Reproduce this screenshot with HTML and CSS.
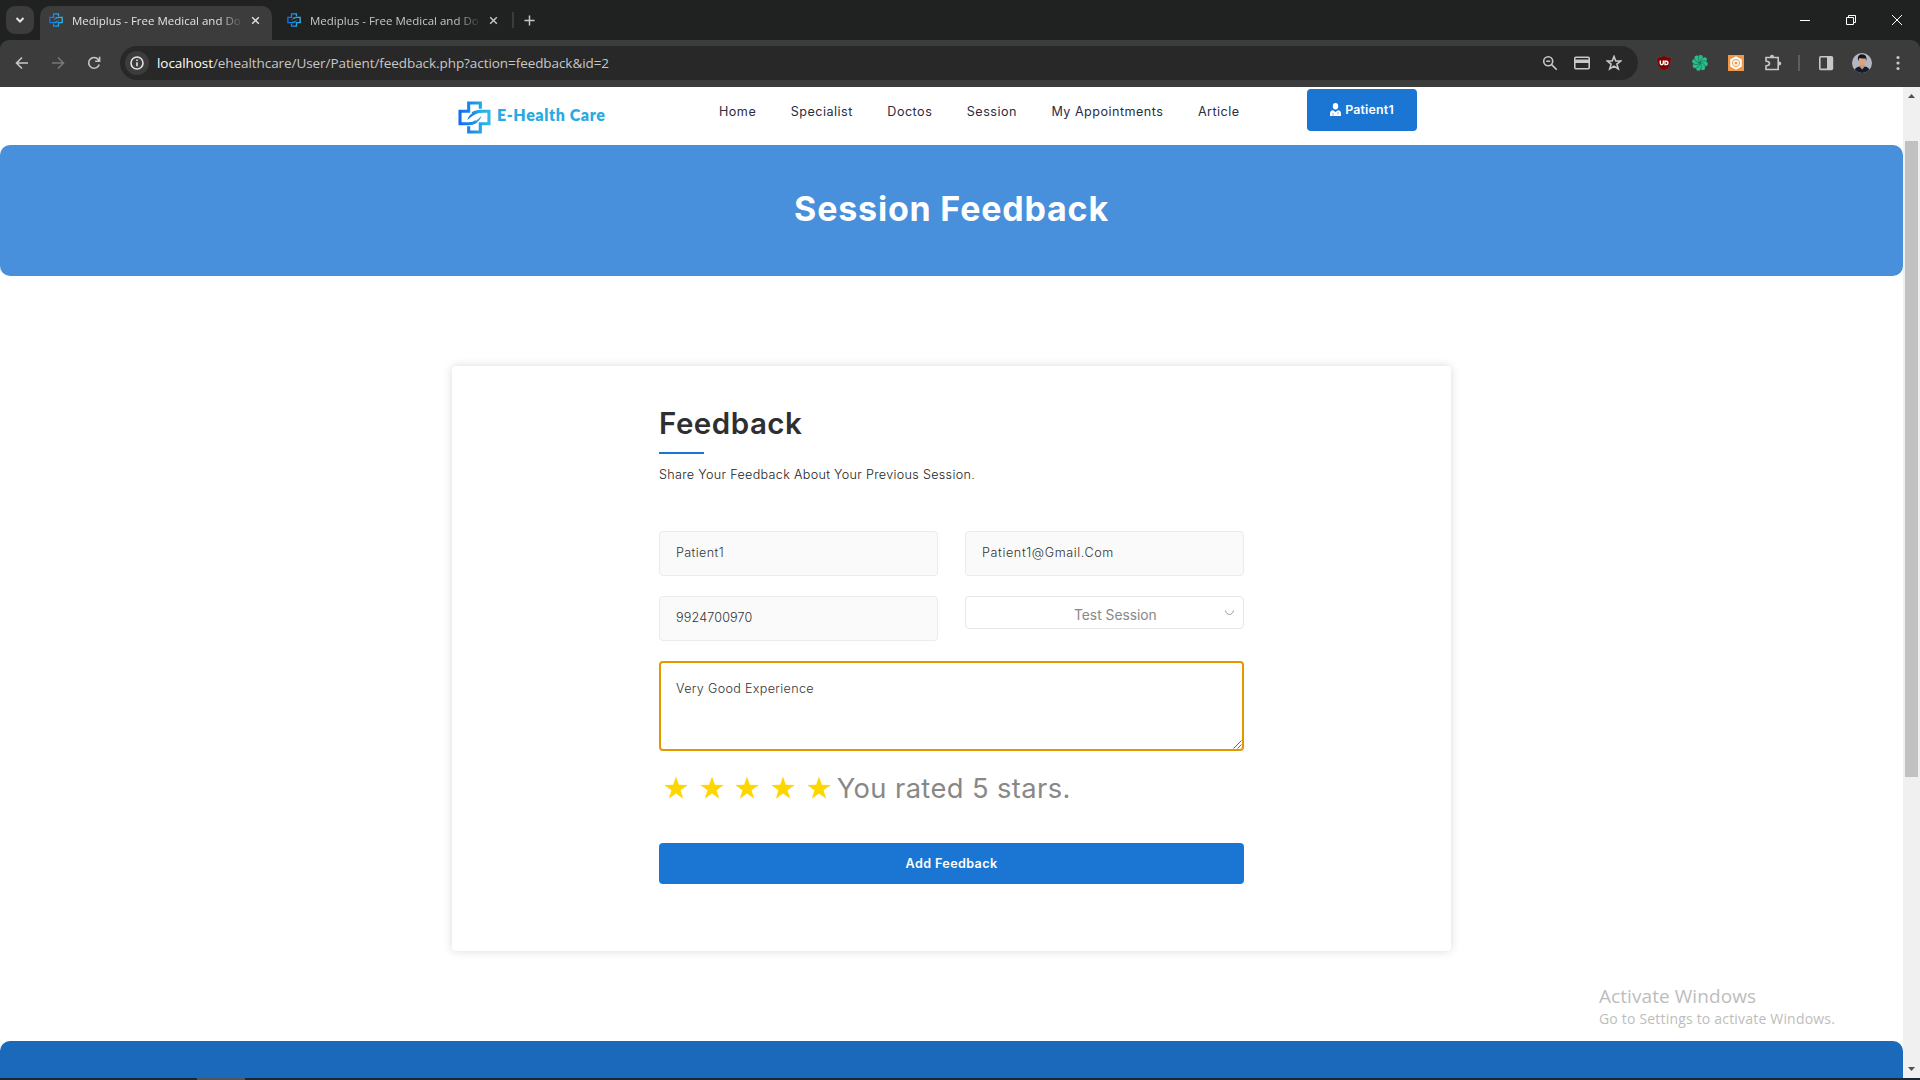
FILE: index.html
```html
<!DOCTYPE html>
<html lang="en">
<head>
<meta charset="utf-8">
<title>Mediplus - Free Medical and Doctor Directory</title>
<link rel="stylesheet" href="styles.css">
</head>
<body>
<svg class="defs" aria-hidden="true">
  <defs>
    <linearGradient id="brand" x1="0" y1="0" x2="1" y2="0">
      <stop offset="0" stop-color="#0f6ff0"/><stop offset="1" stop-color="#2fb9e6"/>
    </linearGradient>
    <symbol id="cross" viewBox="0 0 34 34">
      <path fill="none" stroke="url(#brand)" stroke-width="3.2" d="M23 8V2.100H11V10.600H2.100V23.400H11C14 23.400 17 22.500 19 21M15 13C18 10.800 21 10.600 24 10.600H31.900V23.400H23V31.900H11V26"/>
      <path fill="url(#brand)" d="M9.500 19.500C12 12.500 18 9.500 26 9.500V11.500C19 12 15 15 9.500 19.500ZM24.500 15C22.500 21 18 24.500 10 24.800C16 23 20 20 24.500 15Z"/>
    </symbol>
    <symbol id="star" viewBox="0 0 24 24"><path fill="#ffd700" d="M12 0.500L14.850 8.800L23.800 8.900L16.600 14.200L19.200 22.700L12 17.600L4.800 22.700L7.400 14.200L0.200 8.900L9.150 8.800Z"/></symbol>
  </defs>
</svg>

<header class="browser">
  <div class="tabstrip">
    <button class="tab-search"><svg width="10" height="10" viewBox="0 0 10 10"><path d="M1.500 3L5 6.500L8.500 3" class="ln w2"/></svg></button>
    <div class="tab active">
      <svg class="favicon"><use href="#cross"/></svg>
      <span class="tab-title">Mediplus - Free Medical and Do</span>
      <svg class="tab-x" viewBox="0 0 10 10"><path class="ln" d="M1.300 1.300L8.700 8.700M8.700 1.300L1.300 8.700"/></svg>
    </div>
    <div class="tab">
      <svg class="favicon"><use href="#cross"/></svg>
      <span class="tab-title">Mediplus - Free Medical and Do</span>
      <svg class="tab-x" viewBox="0 0 10 10"><path class="ln" d="M1.300 1.300L8.700 8.700M8.700 1.300L1.300 8.700"/></svg>
    </div>
    <i class="tab-sep"></i>
    <svg class="new-tab" viewBox="0 0 12 12"><path class="ln" d="M6 0.500V11.500M0.500 6H11.500"/></svg>
    <div class="win-controls">
      <svg width="10" height="10" viewBox="0 0 10 10"><path class="thin" d="M0 5.500H10"/></svg>
      <svg width="10" height="10" viewBox="0 0 10 10"><path class="thin" d="M0.500 2.500H7.500V9.500H0.500ZM2.500 2.500V0.500H9.500V7.500H7.500"/></svg>
      <svg width="10" height="10" viewBox="0 0 10 10"><path class="thin" d="M0 0L10 10M10 0L0 10"/></svg>
    </div>
  </div>
  <div class="toolbar">
    <div class="nav-buttons">
      <svg width="14" height="14" viewBox="0 0 14 14"><path class="ln" d="M13 7H2M7 1.500L1.500 7L7 12.500"/></svg>
      <svg class="dim" width="14" height="14" viewBox="0 0 14 14"><path class="ln" d="M1 7H12M7 1.500L12.500 7L7 12.500"/></svg>
      <svg width="14" height="14" viewBox="0 0 14 14"><path class="ln" d="M12.200 8.500A5.400 5.400 0 1 1 11.200 3.400L12.500 4.800M12.600 0.800V5.200H8.200"/></svg>
    </div>
    <div class="omnibox">
      <span class="info"><svg width="14" height="14" viewBox="0 0 14 14"><circle class="ln" cx="7" cy="7" r="6"/><path class="ln" d="M7 6.300V10.300M7 3.500V5"/></svg></span>
      <span class="url"><b>localhost</b>/ehealthcare/User/Patient/feedback.php?action=feedback&amp;id=2</span>
      <div class="omni-icons">
        <svg width="16" height="16" viewBox="0 0 16 16"><circle class="ln" cx="6.200" cy="6.200" r="4.500"/><path class="ln" d="M9.600 9.600L14.800 14.800M4.200 6.200H8.200"/></svg>
        <svg width="16" height="16" viewBox="0 0 16 16"><rect class="ln" x="0.800" y="2.300" width="14.400" height="11.400" rx="1"/><path fill="#c7c7c7" d="M1 4.500H15V8H1Z"/></svg>
        <svg width="16" height="16" viewBox="0 0 16 16"><path class="ln" d="M8 1.500L9.800 6H14.700L10.900 9.100L12.300 14L8 11.200L3.700 14L5.100 9.100L1.300 6H6.200Z"/></svg>
      </div>
    </div>
    <div class="ext-icons">
      <svg width="16" height="16" viewBox="0 0 16 16"><path fill="#800000" stroke="#5a4444" stroke-width=".6" d="M8 0.500C10 2 12.500 2.400 15 2.400C15.200 9 13.500 13.500 8 15.700C2.500 13.500 0.800 9 1 2.400C3.500 2.400 6 2 8 0.500Z"/><path fill="none" stroke="#fff" stroke-width="1.400" d="M4.300 5.500V8.300Q4.300 9.700 5.700 9.700Q7.300 9.700 7.300 8.300V5.500M9 6.200H10.300Q12 6.200 12 7.800Q12 9.600 10.300 9.600H9Z"/></svg>
      <svg class="gap-20" width="16" height="16" viewBox="0 0 16 16"><g fill="#2bbd8c"><circle cx="8" cy="8" r="6"/><circle cx="8.500" cy="2.500" r="2.400"/><circle cx="12.600" cy="4.600" r="2.400"/><circle cx="13.400" cy="9" r="2.400"/><circle cx="10.800" cy="12.800" r="2.400"/><circle cx="6.500" cy="13.400" r="2.400"/><circle cx="3" cy="10.800" r="2.400"/><circle cx="2.600" cy="6.500" r="2.400"/><circle cx="4.800" cy="3" r="2.400"/></g><g fill="none" stroke="#14795a" stroke-width=".8"><path d="M8 8Q5 5 7 0.800M8 8Q7.800 4 12 2M8 8Q10 4.500 15 6.500M8 8Q12 7.500 13.500 12M8 8Q11 11 8.500 15M8 8Q7.500 12 3.500 13.500M8 8Q5.500 11 1 9M8 8Q4 8 2.500 4"/></g></svg>
      <svg class="gap-20" width="16" height="16" viewBox="0 0 16 16"><path fill="#f09848" d="M0 0H16V16H0Z"/><path fill="#fff" d="M8 1.200L13.800 4.500V11.500L8 14.800L2.200 11.500V4.500Z"/><circle cx="8" cy="8" r="3.600" fill="none" stroke="#f09848"/><circle cx="8" cy="8" r="1.500" fill="#f09848"/></svg>
      <svg class="gap-20" width="18" height="18" viewBox="0 0 18 18"><path class="ln" d="M2 3.500H14.200V15.500H2V12Q5.500 11.500 5.500 9.500Q5.500 7.500 2 7Z"/><path fill="#c7c7c7" d="M6 3Q6 0.800 8 0.800T10 3ZM15 7.500Q17.300 7.500 17.300 9.500T15 11.500Z"/></svg>
      <i class="bar"></i>
      <svg class="gap-18" width="16" height="16" viewBox="0 0 16 16"><rect class="ln" x="1.800" y="1.800" width="12.600" height="12.600" rx="1"/><path fill="#c7c7c7" d="M9 2H14.500V14H9Z"/></svg>
      <svg class="gap-18" width="20" height="20" viewBox="0 0 20 20"><clipPath id="av"><circle cx="10" cy="10" r="10"/></clipPath><g clip-path="url(#av)"><path fill="#b4b6c2" d="M0 0H20V20H0Z"/><path fill="#161c29" d="M2 20Q2 14 8 13.500L10 16L12.500 13.500Q18 14 18 20Z"/><path fill="#c99272" d="M8 11H12.300V14L10.200 16.500L8 14Z"/><ellipse cx="10.200" cy="8" rx="3.500" ry="4.700" fill="#d8a584"/><path fill="#17151a" d="M6 8Q4.800 1.500 10 1.300Q15.500 1.500 14.300 8L13.500 5.500Q10 5.500 7.500 5Z"/></g></svg>
      <svg class="gap-24" width="4" height="16" viewBox="0 0 4 16"><g fill="#c7c7c7"><circle cx="2" cy="2.500" r="1.600"/><circle cx="2" cy="8" r="1.600"/><circle cx="2" cy="13.500" r="1.600"/></g></svg>
    </div>
  </div>
</header>

<div class="viewport">
  <main class="page">
    <div class="site-header">
      <a class="logo"><svg class="logo-mark"><use href="#cross"/></svg><span class="logo-text">E-Health Care</span></a>
      <nav class="menu"><a>Home</a><a>Specialist</a><a>Doctos</a><a>Session</a><a>My Appointments</a><a>Article</a></nav>
      <a class="user-btn"><svg width="11" height="13" viewBox="0 0 11 13"><path fill="#fff" d="M5.500 0Q8.200 0 8.200 3.300Q8.200 6.500 5.500 6.500T2.800 3.300Q2.800 0 5.500 0ZM3 7.200L5.500 9L8 7.200Q11 7.600 11 10.500V13H0V10.500Q0 7.600 3 7.200Z"/><path stroke="#1a76d2" stroke-width=".5" d="M3 10V13M8 9V11.500"/></svg><span>Patient1</span></a>
    </div>

    <section class="banner"><h1>Session Feedback</h1></section>

    <section class="card">
      <h2>Feedback</h2>
      <i class="rule"></i>
      <p class="lead">Share Your Feedback About Your Previous Session.</p>
      <form class="fields">
        <div class="field">Patient1</div>
        <div class="field email">Patient1@Gmail.Com</div>
        <div class="field phone">9924700970</div>
        <div class="select"><span>Test Session</span><svg width="9" height="6" viewBox="0 0 9 6"><path d="M0.500 0.500C1.500 5.800 7.500 5.800 8.500 0.500"/></svg></div>
        <div class="message">Very Good Experience<svg class="grip" width="9" height="9" viewBox="0 0 9 9"><path d="M0.500 8.500L8.500 0.500M4.500 8.500L8.500 4.500"/></svg></div>
      </form>
      <div class="rating">
        <div class="stars"><svg><use href="#star"/></svg><svg><use href="#star"/></svg><svg><use href="#star"/></svg><svg><use href="#star"/></svg><svg><use href="#star"/></svg></div>
        <span>You rated 5 stars.</span>
      </div>
      <button class="submit">Add Feedback</button>
    </section>

    <footer class="site-footer"></footer>
    <div class="watermark"><strong>Activate Windows</strong><span>Go to Settings to activate Windows.</span></div>
  </main>
  <div class="scrollbar">
    <svg width="7" height="4" viewBox="0 0 7 4"><path d="M0 4L3.500 0L7 4Z"/></svg>
    <i class="thumb"></i>
    <svg width="7" height="4" viewBox="0 0 7 4"><path d="M0 0L3.500 4L7 0Z"/></svg>
  </div>
</div>
<div class="taskbar"><i></i></div>
</body>
</html>
```
FILE: styles.css
```css
* { box-sizing: border-box; }
body { margin: 0; width: 1920px; height: 1080px; overflow: hidden; display: flex; flex-direction: column; background: #fff; font-family: Inter, "Open Sans", sans-serif; }
.defs { position: absolute; width: 0; height: 0; }
svg { display: block; flex: none; }
i { display: block; }

/* Browser frame */
.browser { flex: none; height: 87px; background: #202221; font-family: "Open Sans", "Noto Sans", sans-serif; color: #c7c7c7; }
.ln { fill: none; stroke: currentColor; stroke-width: 1.6; }
.w2 { stroke-width: 2; }
.thin { fill: none; stroke: #fff; stroke-width: 1; }
.tabstrip { height: 40px; display: flex; align-items: center; padding-left: 6px; }
.tab-search { width: 28px; height: 28px; border: 0; padding: 0; border-radius: 9px; background: #3c3c3c; color: #e3e3e3; display: grid; place-items: center; }
.tab { width: 232px; height: 34px; align-self: flex-end; margin-left: 6px; padding: 0 11px 0 9px; display: flex; align-items: center; border-radius: 10px 10px 0 0; }
.tab.active { background: #3c3c3c; color: #e3e3e3; box-shadow: 0 12px 0 #3c3c3c; }
.favicon { width: 14px; height: 14px; margin-top: -6px; }
.tab-title { width: 170px; margin: -4px 0 0 9px; white-space: nowrap; font-size: 11.500px; line-height: 18px; -webkit-mask-image: linear-gradient(90deg, #000 146px, transparent 172px); mask-image: linear-gradient(90deg, #000 146px, transparent 172px); }
.tab-x { width: 9px; height: 9px; margin: -6px 0 0 9px; }
.tab-sep { width: 2px; height: 16px; margin-left: 2px; background: #3a3c3b; }
.new-tab { width: 11px; height: 11px; margin-left: 10px; }
.win-controls { margin-left: auto; display: flex; gap: 36px; padding-right: 18px; }
.toolbar { height: 47px; display: flex; align-items: center; padding-bottom: 1px; background: #3c3c3c; border-radius: 9px 9px 0 0; }
.nav-buttons { display: flex; gap: 22px; padding-left: 15px; width: 120px; }
.dim { color: #777; }
.omnibox { width: 1518px; height: 34px; border-radius: 17px; background: #282828; display: flex; align-items: center; padding: 0 16px 0 5px; }
.info { width: 24px; height: 24px; border-radius: 50%; background: #3c3c3c; color: #e3e3e3; display: grid; place-items: center; }
.url { margin-left: 8px; font-size: 13.500px; line-height: 20px; letter-spacing: -.07px; }
.url b { font-weight: 400; color: #fff; }
.omni-icons { display: flex; gap: 16px; margin-left: auto; }
.ext-icons { display: flex; align-items: center; padding-left: 18px; }
.gap-18 { margin-left: 18px; }
.gap-20 { margin-left: 20px; }
.gap-24 { margin-left: 24px; }
.bar { width: 2px; height: 16px; margin-left: 16px; background: #5e5e5e; }

/* Scrolling page */
.viewport { height: 991px; display: flex; }
.page { position: relative; width: 1903px; overflow: hidden; display: flex; flex-direction: column; }
.scrollbar { width: 17px; background: #f0f0f0; display: flex; flex-direction: column; align-items: center; padding: 7px 0; }
.scrollbar path { fill: #505050; }
.thumb { width: 13px; height: 636px; margin: 43px 0 auto; background: #c1c1c1; }

.site-header { flex: none; height: 58px; display: flex; padding-left: 458px; }
.logo { display: flex; width: 261px; }
.logo-mark { width: 33px; height: 33px; margin: 14px 6px 0 0; }
.logo-text { height: 20px; margin-top: 18px; font: 800 16px/20px Lato, sans-serif; letter-spacing: .6px; color: #29abe2; }
.menu { width: 588px; display: flex; padding-top: 15px; gap: 34.500px; font-size: 12.600px; font-weight: 400; line-height: 20px; letter-spacing: .48px; color: #2c2d3f; }
.user-btn { width: 110px; height: 42px; margin-top: 2px; padding-bottom: 1px; border-radius: 4px; background: #1a76d2; color: #fff; display: flex; align-items: center; justify-content: center; gap: 4px; font-size: 12.400px; font-weight: 600; letter-spacing: .2px; }

.banner { flex: none; height: 131px; padding-bottom: 3px; border-radius: 10px; background: #4890dc; display: flex; align-items: center; justify-content: center; }
h1 { margin: 0; font-size: 34px; font-weight: 700; line-height: 50px; letter-spacing: .8px; color: #fff; }

.card { flex: none; width: 999px; height: 585px; margin: 90px 0 90px 452px; padding: 37px 207px 0; border-radius: 4px; box-shadow: 0 0 10px rgba(0, 0, 0, .15); }
h2 { margin: 0; font-size: 29.500px; font-weight: 600; line-height: 40px; letter-spacing: .5px; color: #2f2f31; }
.rule { width: 45px; height: 2px; margin: 9px 0 11px; background: #1a76d2; }
.lead { margin: 0 0 46px; font-size: 12.600px; line-height: 20px; font-weight: 300; letter-spacing: .31px; color: #222; }
.fields { display: grid; grid-template-columns: 279px 279px; column-gap: 27px; row-gap: 20px; }
.field { height: 45px; padding: 11px 16px; border: 1px solid #ebebeb; border-radius: 4px; background: #fafafa; font-size: 12.600px; line-height: 19px; font-weight: 300; letter-spacing: .38px; color: #333; }
.email { letter-spacing: .61px; }
.phone { letter-spacing: .15px; }
.select { height: 33px; padding: 8px 9px 0 108px; display: flex; justify-content: space-between; border: 1px solid #e6e6e6; border-radius: 4px; font-size: 13.800px; line-height: 20px; color: #888; }
.select path { fill: none; stroke: #999; }
.select svg { margin-top: 5px; }
.message { position: relative; grid-column: 1 / 3; height: 90px; padding: 16px 15px; border: 2px solid #e59700; border-radius: 4px; font-size: 12.600px; line-height: 20px; font-weight: 300; letter-spacing: .32px; color: #333; }
.grip { position: absolute; right: 0; bottom: 0; }
.grip path { stroke: #444; stroke-width: .8; }
.rating { display: flex; height: 64px; margin-top: 5px; padding-left: 5px; font-size: 27.300px; line-height: 65px; letter-spacing: .4px; color: #888; }
.stars { display: flex; gap: 11.700px; align-items: center; margin-right: 6px; }
.stars svg { width: 24px; height: 24px; }
.submit { display: block; width: 585px; height: 41px; margin: 23px 0 0; padding: 0; border: 0; border-radius: 4px; background: #1a76d2; color: #fff; font: 600 12.600px/41px Inter, sans-serif; letter-spacing: .38px; }
.site-footer { flex: none; height: 60px; border-radius: 10px; background: #1a69bb; }
.watermark { position: absolute; left: 1599px; bottom: 49px; display: flex; flex-direction: column; font-family: "Open Sans", sans-serif; color: #bdbdbd; font-size: 14px; line-height: 20px; letter-spacing: .19px; }
.watermark strong { font-size: 19px; font-weight: 400; line-height: 26px; letter-spacing: .07px; }

.taskbar { height: 2px; padding-left: 197px; background: #1b2833; }
.taskbar i { width: 48px; height: 2px; background: #4e565f; }
```
